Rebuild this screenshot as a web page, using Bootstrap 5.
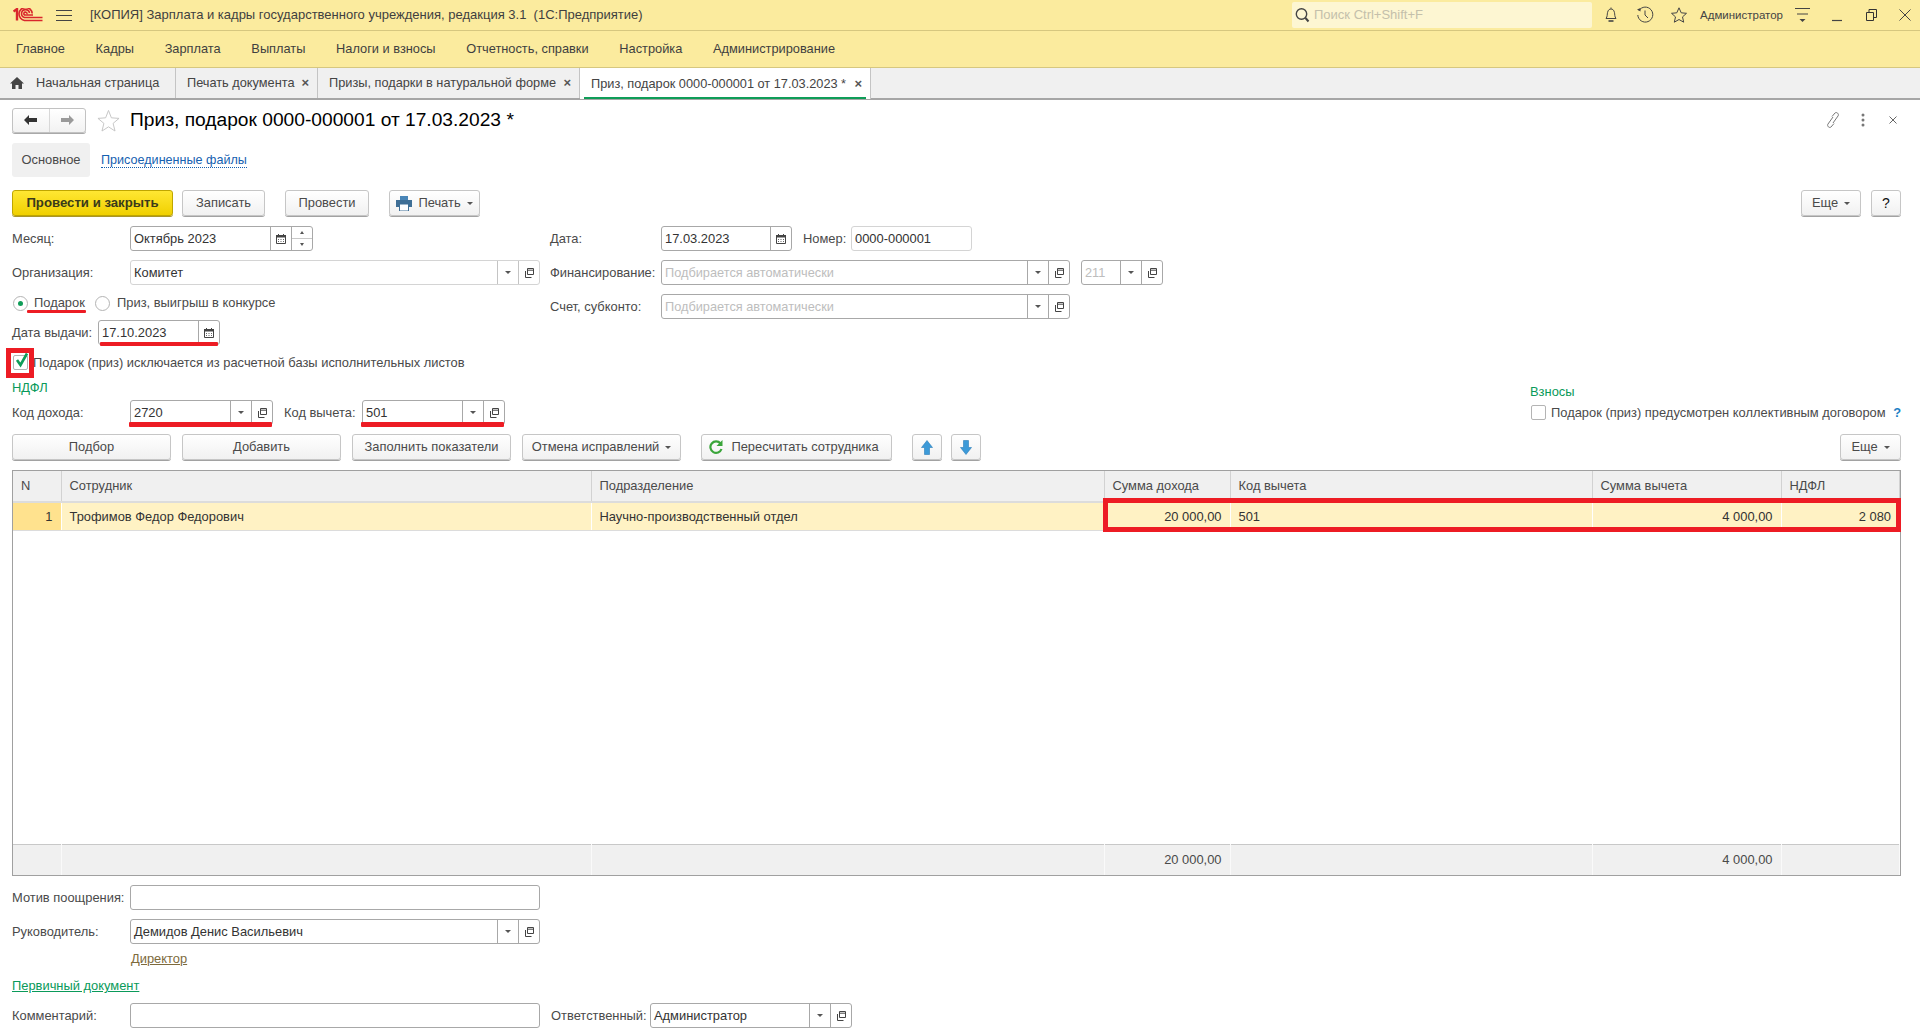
<!DOCTYPE html>
<html lang="ru">
<head>
  <meta charset="UTF-8" />
  <title>Приз, подарок 0000-000001 от 17.03.2023</title>
  <link href="https://cdn.jsdelivr.net/npm/bootstrap@5.3.0/dist/css/bootstrap.min.css" rel="stylesheet">
  <style>
    html, body { height: 100%; margin: 0; }
    body {
      width: 1920px; height: 1035px; overflow: hidden; background: #fff;
      font-family: "Liberation Sans", Arial, sans-serif; font-size: 12.9px; color: #4a4a4a; line-height: 16px;
    }
    /* top bars */
    .title-bar { height: 31px; background: #fbeb9e; border-bottom: 1px solid #d6c77f; padding-left: 13px; color: #3f3f3f; font-size: 13px; }
    .burger { margin-left: 13px; }
    .title-text { margin-left: 18px; width: 1202px; white-space: nowrap; }
    .search-box { width: 300px; height: 26px; background: #fdf6d2; border-radius: 2px; padding-left: 3px; color: #c4c0ab; gap: 4px; }
    .sys-bell { margin-left: 11px; }
    .sys-hist { margin-left: 17px; }
    .sys-star { margin-left: 16px; }
    .sys-user { font-size: 11.5px; width: 95px; margin-left: 12px; color: #444; white-space: nowrap; }
    .sys-min { margin-left: 20px; }
    .sys-rest { margin-left: 23px; }
    .sys-close { margin-left: 22px; }
    .menu-bar { height: 37px; background: #fbeb9e; border-bottom: 1px solid #d6c77f; padding-left: 16px; gap: 30.7px; color: #3f3f3f; font-size: 12.8px; }
    .tab-bar { height: 32px; background: #f0f0f0; border-bottom: 2px solid #a6a6a6; color: #444; font-size: 12.75px; }
    .tab-item { height: 30px; border-right: 1px solid #c4c4c4; padding-left: 11px; white-space: nowrap; position: relative; }
    .tab-home { width: 176px; padding-left: 10px; gap: 12px; }
    .tab-print { width: 142px; }
    .tab-prizes { width: 262px; }
    .tab-current { width: 291px; background: #fff; height: 31px; padding-left: 11px; }
    .tab-current::after { content: ""; position: absolute; left: 4px; right: 4px; bottom: 0; height: 2px; background: #0f9d58; }
    .tab-x { margin-left: auto; margin-right: 8px; font-weight: 700; color: #555; font-size: 13px; }
    /* form */
    .doc-body { padding: 8px 19px 0 12px; }
    .head-row { height: 24px; }
    .nav-pair { width: 74px; height: 25px; border: 1px solid #c2c2c2; border-radius: 3px; box-shadow: 0 1px 0 #a9a9a9; background: linear-gradient(#fff, #f2f2f2); }
    .nav-pair span { flex: 1; display: flex; align-items: center; justify-content: center; height: 100%; }
    .nav-pair span + span { border-left: 1px solid #d8d8d8; }
    .star-fav { margin-left: 11px; }
    .doc-title { font-size: 19.2px; color: #000; margin-left: 10px; white-space: nowrap; }
    .doc-tools { margin-left: auto; }
    .tool-dots { margin-left: 20px; }
    .tool-x { margin-left: 24px; margin-right: 4px; }
    .page-tabs { margin-top: 11px; height: 34px; }
    .page-tab-on { width: 78px; height: 34px; background: #f0f0f0; border-radius: 3px; justify-content: center; }
    .page-tab-link { margin-left: 11px; color: #1560b0; border-bottom: 1px dotted #1560b0; line-height: 14px; font-size: 12.6px; }
    .cmd-row { margin-top: 13px; height: 26px; }
    .onec-btn {
      height: 26px; padding: 0; border: 1px solid #c6c6c6; border-radius: 3px; color: #4a4a4a; font-size: 12.9px; line-height: 16px;
      background: linear-gradient(#fff, #f1f1f1); box-shadow: 0 1px 0 #a2a2a2; display: inline-flex; align-items: center; justify-content: center; gap: 6px; flex: none;
    }
    .btn-post { width: 161px; font-weight: 700; font-size: 13.2px; color: #3a3a1a; border-color: #bfa600; background: linear-gradient(#ffe733, #f0d000); box-shadow: 0 1px 0 #a9952a; }
    .btn-save { width: 83px; margin-left: 9px; }
    .btn-run { width: 84px; margin-left: 20px; }
    .btn-print { width: 91px; margin-left: 20px; }
    .btn-more { width: 60px; }
    .btn-help { width: 30px; margin-left: 10px; color: #111; font-size: 14px; }
    .caret-dn { width: 0; height: 0; border-left: 3px solid transparent; border-right: 3px solid transparent; border-top: 3px solid #555; flex: none; }
    .fm-left { width: 538px; flex: none; }
    .fm-cols { margin-top: 10px; }
    .fm-row { height: 25px; }
    .fm-row + .fm-row { margin-top: 9px; }
    .lbl-w { width: 118px; flex: none; white-space: nowrap; }
    .lbl-r { width: 111px; flex: none; white-space: nowrap; }
    .fld {
      height: 25px; border: 1px solid #a8a8a8; border-radius: 3px; background: #fff; display: flex; align-items: stretch; flex: none; color: #333; position: relative;
    }
    .fld-soft { border-color: #d4d4d4; }
    .fld-val { flex: 1; padding-left: 3px; display: flex; align-items: center; white-space: nowrap; overflow: hidden; }
    .fld-ph { color: #bdbdbd; font-size: 12.75px; }
    .fld-seg { width: 21px; flex: none; border-left: 1px solid #a8a8a8; display: flex; align-items: center; justify-content: center; }
    .fld-soft .fld-seg { border-color: #c4c4c4; }
    .fld-spin { flex-direction: column; }
    .fld-spin i { flex: 1; width: 100%; display: flex; align-items: center; justify-content: center; }
    .fld-spin i + i { border-top: 1px solid #c8c8c8; }
    .caret-up { width: 0; height: 0; border-left: 2px solid transparent; border-right: 2px solid transparent; border-bottom: 3px solid #555; }
    .caret-sm { width: 0; height: 0; border-left: 2px solid transparent; border-right: 2px solid transparent; border-top: 3px solid #555; }
    .w-month { width: 183px; }
    .w-org { width: 410px; }
    .w-date { width: 122px; }
    .w-docdate { width: 131px; }
    .w-num { width: 121px; }
    .w-fin { width: 409px; }
    .w-kbk { width: 82px; margin-left: 11px; }
    .w-code { width: 143px; }
    .lbl-num { width: 48px; margin-left: 11px; flex: none; }
    .radio-row { height: 20px; margin-top: 8px; padding-left: 1px; }
    .rb { width: 15px; height: 15px; border: 1px solid #b4b4b4; border-radius: 50%; background: #fff; display: flex; align-items: center; justify-content: center; flex: none; }
    .rb-dot { width: 5px; height: 5px; border-radius: 50%; background: #0f9d58; }
    .radio-t1 { width: 52px; margin: 0 9px 0 6px; position: relative; white-space: nowrap; }
    .radio-t2 { margin-left: 7px; }
    .date-row { margin-top: 7px; height: 25px; }
    .lbl-date { width: 86px; flex: none; white-space: nowrap; }
    .ul-red { position: absolute; background: #ed1c24; border-radius: 1px; }
    .ul-gift { left: -7px; right: 0; bottom: -2px; height: 3px; }
    .ul-date { left: 1px; right: 1px; bottom: -2px; height: 4px; }
    .ul-code { left: -2px; right: 0; bottom: -3px; height: 5px; }
    .chk-row { margin-top: 10px; height: 15px; padding-left: 1px; position: relative; }
    .chk-box { width: 15px; height: 15px; border: 1px solid #b4b4b4; border-radius: 2px; background: #fff; flex: none; position: relative; }
    .chk-mark { position: absolute; left: 0; top: -4px; }
    .chk-red { position: absolute; left: -8px; top: -8px; width: 28px; height: 30px; border: 5px solid #ed1c24; }
    .chk-text { margin-left: 5px; white-space: nowrap; }
    .sec-row { margin-top: 10px; height: 15px; }
    .sec-title { color: #0a9a5a; }
    .code-row { height: 25px; margin-top: 5px; }
    .vz-block { width: 371px; flex: none; margin-left: auto; }
    .vz-title { margin-top: 14px; height: 16px; }
    .vz-line { margin-top: 5px; height: 15px; padding-left: 1px; }
    .vz-help { margin-left: auto; color: #1b7fc4; font-weight: 700; }
    .lbl-code2 { width: 72px; margin: 0 6px 0 11px; flex: none; white-space: nowrap; }
    .grid-cmd { margin-top: 9px; height: 26px; gap: 11px; }
    .grid-cmd .onec-btn { width: 159px; }
    .grid-cmd .btn-fix { margin-right: 9px; }
    .grid-cmd .btn-calc { width: 191px; margin-right: 9px; gap: 8px; padding-right: 5px; }
    .grid-cmd .btn-arrow { width: 30px; margin-right: -2px; }
    .grid-cmd .btn-tail { width: 61px; margin-left: auto; }
    /* tabular part */
    .grid-wrap { margin-top: 10px; height: 406px; border: 1px solid #a0a0a0; position: relative; }
    .doc-grid { table-layout: fixed; width: 100%; height: 100%; --bs-table-color: #4a4a4a; --bs-table-bg: transparent; --bs-table-border-color: #dcdcdc; }
    .doc-grid td, .doc-grid th { padding: 0 8px; border-width: 0 1px 0 0; border-style: solid; vertical-align: middle; font-weight: 400; white-space: nowrap; box-shadow: none; }
    .doc-grid th { background: #f0f0f0; height: 31px; border-bottom: 2px solid #dcdcdc; border-right-color: #d2d2d2; }
    .doc-grid .row-on td { background: #fff2c4; height: 28px; padding-top: 1px; color: #333; border-bottom: 1px solid #dcdcdc; border-right-color: #fff; }
    .doc-grid .row-on .cell-no { background: #ffe28e; text-align: right; }
    .doc-grid .row-gap td { border: 0; }
    .doc-grid .row-foot td { background: #f0f0f0; height: 31px; border-top: 1px solid #c8c8c8; border-right-color: #fafafa; }
    .col-no { width: 48px; } .col-emp { width: 530px; } .col-dep { width: 513px; }
    .col-sum { width: 126px; } .col-code { width: 362px; } .col-ded { width: 189px; }
    .num-r { text-align: right; }
    .row-mark { position: absolute; left: 1090px; right: -1px; top: 27px; height: 34px; border: 5px solid #ed1c24; pointer-events: none; }
    /* footer fields */
    .foot-block { margin-top: 9px; }
    .foot-row { height: 25px; }
    .foot-row + .foot-row { margin-top: 9px; }
    .link-boss { margin: 7px 0 0 119px; height: 16px; color: #7d6a3c; text-decoration: underline; width: 60px; }
    .link-doc { margin: 11px 0 0 0; height: 16px; color: #0a9a5a; text-decoration: underline; }
    .foot-last { margin-top: 9px; height: 25px; }
    .w-foot { width: 410px; }
    .w-resp { width: 202px; }
    .lbl-resp { width: 93px; margin: 0 6px 0 11px; flex: none; white-space: nowrap; }
  </style>
</head>
<body>

  <svg width="0" height="0" class="position-absolute">
    <symbol id="i-open" viewBox="0 0 12 12"><path d="M4.5 1.5h6v6h-6z M4.5 3.2h6 M2.5 4v6.5h6" fill="none" stroke="#444" stroke-width="1"/></symbol>
    <symbol id="i-cal" viewBox="0 0 12 12"><path d="M1.5 2.5h9v8h-9z" fill="none" stroke="#444"/><path d="M1 2h10v2.5H1z M3 1h1v2H3z M8 1h1v2H8z" fill="#444"/><path d="M3 6h1v1H3z M5.5 6h1v1h-1z M8 6h1v1H8z M3 8h1v1H3z M5.5 8h1v1h-1z M8 8h1v1H8z" fill="#666"/></symbol>
  </svg>

  <div class="title-bar d-flex align-items-center">
    <svg width="30" height="14" viewBox="0 0 30 14" fill="none" stroke="#d9262c" stroke-width="1.6">
      <path d="M0.5 3.5 L4 1 V12.5" stroke-width="2.4"/>
      <path d="M16.5 5 A4 4 0 1 0 11.5 9.5 H29.5"/>
      <path d="M19.2 5.5 A6.6 6.6 0 1 0 11.5 12.5 H29.5"/>
      <path d="M14 6 A1.6 1.6 0 1 0 11.5 7 H20"/>
    </svg>
    <svg width="16" height="13" viewBox="0 0 16 13" class="burger" stroke="#444" stroke-width="1.2"><path d="M0 1.5h16M0 6.5h16M0 11.5h16"/></svg>
    <span class="title-text">[КОПИЯ] Зарплата и кадры государственного учреждения, редакция 3.1&nbsp; (1С:Предприятие)</span>
    <div class="search-box d-flex align-items-center">
      <svg width="15" height="16" viewBox="0 0 15 16" fill="none" stroke="#444" stroke-width="1.4"><circle cx="6.5" cy="7" r="5.2"/><path d="M10.5 11l3 3.5" stroke-width="2"/></svg>
      <span>Поиск Ctrl+Shift+F</span>
    </div>
    <svg width="16" height="18" viewBox="0 0 16 18" class="sys-bell" fill="none" stroke="#444"><path d="M8 1.5v1.200M3 12.500c1.600-2 1-4 1.600-6.200C5.100 4 6.400 3 8 3s2.900 1 3.400 3.300c.6 2.200 0 4.200 1.600 6.200z"/><path d="M5.500 15h5" stroke-width="1.6"/></svg>
    <svg width="18" height="18" viewBox="0 0 18 18" class="sys-hist" fill="none" stroke="#444"><path d="M3 4.500A7.500 7.500 0 1 1 1.800 9"/><path d="M9 4.500V9l3 3"/><path d="M1 3.500l3.500-1.500v3.500z" fill="#444" stroke="none"/></svg>
    <svg width="18" height="18" viewBox="0 0 18 18" class="sys-star" fill="none" stroke="#444"><path d="M9 1.800l2.200 5 5.300.5-4 3.600 1.200 5.300L9 13.500l-4.700 2.700 1.200-5.300-4-3.600 5.300-.5z"/></svg>
    <span class="sys-user">Администратор</span>
    <svg width="16" height="18" viewBox="0 0 16 18" fill="none" stroke="#444"><path d="M0 2.500h15M2 8h11"/><path d="M4.500 13h6L7.500 16z" fill="#444" stroke="none"/></svg>
    <svg width="12" height="14" viewBox="0 0 12 14" class="sys-min" stroke="#444" stroke-width="1.2"><path d="M1 12.500h10"/></svg>
    <svg width="11" height="12" viewBox="0 0 11 12" class="sys-rest" fill="none" stroke="#333"><path d="M0.500 3.500h7v8h-7z M3 3.500V.5h7.500v8H7.500"/></svg>
    <svg width="12" height="12" viewBox="0 0 12 12" class="sys-close" stroke="#444"><path d="M.5.500l11 11M11.500.5l-11 11"/></svg>
  </div>

  <div class="menu-bar d-flex align-items-center">
    <span>Главное</span><span>Кадры</span><span>Зарплата</span><span>Выплаты</span><span>Налоги и взносы</span><span>Отчетность, справки</span><span>Настройка</span><span>Администрирование</span>
  </div>

  <div class="tab-bar d-flex">
    <div class="tab-item tab-home d-flex align-items-center">
      <svg width="14" height="12" viewBox="0 0 14 12" fill="#444"><path d="M7 0L0 6.500h2V12h3.500V8h3v4H12V6.500h2z"/></svg>
      <span>Начальная страница</span>
    </div>
    <div class="tab-item tab-print d-flex align-items-center"><span>Печать документа</span><span class="tab-x">×</span></div>
    <div class="tab-item tab-prizes d-flex align-items-center"><span>Призы, подарки в натуральной форме</span><span class="tab-x">×</span></div>
    <div class="tab-item tab-current d-flex align-items-center"><span>Приз, подарок 0000-000001 от 17.03.2023 *</span><span class="tab-x">×</span></div>
  </div>

  <div class="doc-body">
    <div class="head-row d-flex align-items-center">
      <div class="nav-pair d-flex">
        <span><svg width="14" height="10" viewBox="0 0 14 10" fill="#333"><path d="M5 0v3h8v4H5v3L0 5z"/></svg></span>
        <span><svg width="14" height="10" viewBox="0 0 14 10" fill="#9a9a9a"><path d="M9 0v3H1v4h8v3l5-5z"/></svg></span>
      </div>
      <svg width="23" height="23" viewBox="0 0 24 24" fill="#fff" stroke="#c4c4c4" class="star-fav"><path d="M12 1.500l3 7.700 8 .6-6.200 5.200 2 8L12 18.600 5.200 23l2-8L1 9.800l8-.6z"/></svg>
      <span class="doc-title">Приз, подарок 0000-000001 от 17.03.2023 *</span>
      <div class="doc-tools d-flex align-items-center">
        <svg width="16" height="18" viewBox="0 0 16 18" fill="none" stroke="#777"><path d="M7 5.500l3-3.500c1.500-1.500 4.500 1 3 3l-5 7"/><path d="M9 12.500l-3 3.500c-1.500 1.500-4.500-1-3-3l5-7"/></svg>
        <svg width="4" height="14" viewBox="0 0 4 14" class="tool-dots" fill="#777"><circle cx="2" cy="2" r="1.5"/><circle cx="2" cy="7" r="1.5"/><circle cx="2" cy="12" r="1.5"/></svg>
        <svg width="8" height="8" viewBox="0 0 8 8" class="tool-x" stroke="#666"><path d="M.5.500l7 7M7.500.5l-7 7"/></svg>
      </div>
    </div>

    <div class="page-tabs d-flex align-items-center">
      <div class="page-tab-on d-flex align-items-center">Основное</div>
      <span class="page-tab-link">Присоединенные файлы</span>
    </div>

    <div class="cmd-row d-flex">
      <button class="btn onec-btn btn-post">Провести и закрыть</button>
      <button class="btn onec-btn btn-save">Записать</button>
      <button class="btn onec-btn btn-run">Провести</button>
      <button class="btn onec-btn btn-print">
        <svg width="16" height="15" viewBox="0 0 16 15"><path d="M4 0h8v4H4z" fill="#4a86b8"/><path d="M0 4h16v7H0z" fill="#3f6f96"/><path d="M3.500 8h9v7h-9z" fill="#fff" stroke="#3f6f96"/></svg>
        <span>Печать</span><span class="caret-dn"></span>
      </button>
      <button class="btn onec-btn btn-more ms-auto">Еще <span class="caret-dn"></span></button>
      <button class="btn onec-btn btn-help">?</button>
    </div>

    <div class="fm-cols d-flex">
      <div class="fm-left">
        <div class="fm-row d-flex align-items-center">
          <span class="lbl-w">Месяц:</span>
          <div class="fld w-month">
            <div class="fld-val">Октябрь 2023</div>
            <div class="fld-seg"><svg width="12" height="12"><use href="#i-cal"/></svg></div>
            <div class="fld-seg fld-spin"><i><span class="caret-up"></span></i><i><span class="caret-sm"></span></i></div>
          </div>
        </div>
        <div class="fm-row d-flex align-items-center">
          <span class="lbl-w">Организация:</span>
          <div class="fld fld-soft w-org">
            <div class="fld-val">Комитет</div>
            <div class="fld-seg"><span class="caret-dn"></span></div>
            <div class="fld-seg"><svg width="12" height="12"><use href="#i-open"/></svg></div>
          </div>
        </div>
        <div class="radio-row d-flex align-items-center">
          <span class="rb"><span class="rb-dot"></span></span>
          <span class="radio-t1">Подарок<span class="ul-red ul-gift"></span></span>
          <span class="rb"></span>
          <span class="radio-t2">Приз, выигрыш в конкурсе</span>
        </div>
        <div class="date-row d-flex align-items-center">
          <span class="lbl-date">Дата выдачи:</span>
          <div class="fld w-date">
            <div class="fld-val">17.10.2023</div>
            <div class="fld-seg"><svg width="12" height="12"><use href="#i-cal"/></svg></div>
            <span class="ul-red ul-date"></span>
          </div>
        </div>
        <div class="chk-row d-flex align-items-center">
          <span class="chk-box">
            <svg class="chk-mark" width="16" height="16" viewBox="0 0 16 16" fill="none" stroke="#0f9d58" stroke-width="2.6"><path d="M3 8l3.500 5L13 1.500"/></svg>
            <span class="chk-red"></span>
          </span>
          <span class="chk-text">Подарок (приз) исключается из расчетной базы исполнительных листов</span>
        </div>
      </div>
      <div class="flex-grow-1">
        <div class="fm-row d-flex align-items-center">
          <span class="lbl-r">Дата:</span>
          <div class="fld w-docdate">
            <div class="fld-val">17.03.2023</div>
            <div class="fld-seg"><svg width="12" height="12"><use href="#i-cal"/></svg></div>
          </div>
          <span class="lbl-num">Номер:</span>
          <div class="fld fld-soft w-num"><div class="fld-val">0000-000001</div></div>
        </div>
        <div class="fm-row d-flex align-items-center">
          <span class="lbl-r">Финансирование:</span>
          <div class="fld w-fin">
            <div class="fld-val fld-ph">Подбирается автоматически</div>
            <div class="fld-seg"><span class="caret-dn"></span></div>
            <div class="fld-seg"><svg width="12" height="12"><use href="#i-open"/></svg></div>
          </div>
          <div class="fld w-kbk">
            <div class="fld-val fld-ph">211</div>
            <div class="fld-seg"><span class="caret-dn"></span></div>
            <div class="fld-seg"><svg width="12" height="12"><use href="#i-open"/></svg></div>
          </div>
        </div>
        <div class="fm-row d-flex align-items-center">
          <span class="lbl-r">Счет, субконто:</span>
          <div class="fld w-fin">
            <div class="fld-val fld-ph">Подбирается автоматически</div>
            <div class="fld-seg"><span class="caret-dn"></span></div>
            <div class="fld-seg"><svg width="12" height="12"><use href="#i-open"/></svg></div>
          </div>
        </div>
      </div>
    </div>

    <div class="d-flex">
      <div class="flex-grow-1">
        <div class="sec-row sec-title">НДФЛ</div>
        <div class="code-row d-flex align-items-center">
          <span class="lbl-w">Код дохода:</span>
          <div class="fld w-code">
            <div class="fld-val">2720</div>
            <div class="fld-seg"><span class="caret-dn"></span></div>
            <div class="fld-seg"><svg width="12" height="12"><use href="#i-open"/></svg></div>
            <span class="ul-red ul-code"></span>
          </div>
          <span class="lbl-code2">Код вычета:</span>
          <div class="fld w-code">
            <div class="fld-val">501</div>
            <div class="fld-seg"><span class="caret-dn"></span></div>
            <div class="fld-seg"><svg width="12" height="12"><use href="#i-open"/></svg></div>
            <span class="ul-red ul-code"></span>
          </div>
        </div>
      </div>
      <div class="vz-block">
        <div class="sec-title vz-title">Взносы</div>
        <div class="vz-line d-flex align-items-center">
          <span class="chk-box"></span>
          <span class="chk-text">Подарок (приз) предусмотрен коллективным договором</span>
          <span class="vz-help">?</span>
        </div>
      </div>
    </div>

    <div class="grid-cmd d-flex">
      <button class="btn onec-btn">Подбор</button>
      <button class="btn onec-btn">Добавить</button>
      <button class="btn onec-btn">Заполнить показатели</button>
      <button class="btn onec-btn btn-fix">Отмена исправлений <span class="caret-dn"></span></button>
      <button class="btn onec-btn btn-calc">
        <svg width="14" height="14" viewBox="0 0 14 14" fill="none" stroke="#3aa53a" stroke-width="2.2"><path d="M11.500 3.500A5.700 5.700 0 1 0 12.500 9"/><path d="M13.500 0v6h-6z" fill="#3aa53a" stroke="none"/></svg>
        <span>Пересчитать сотрудника</span>
      </button>
      <button class="btn onec-btn btn-arrow"><svg width="12" height="15" viewBox="0 0 12 15"><path d="M6 .5l5.500 7H8.500v7h-5v-7H.5z" fill="#3c9ad8" stroke="#2a7cb8" stroke-width=".6"/></svg></button>
      <button class="btn onec-btn btn-arrow"><svg width="12" height="15" viewBox="0 0 12 15"><path d="M6 14.500l5.500-7H8.500v-7h-5v7H.5z" fill="#3c9ad8" stroke="#2a7cb8" stroke-width=".6"/></svg></button>
      <button class="btn onec-btn btn-tail">Еще <span class="caret-dn"></span></button>
    </div>

    <div class="grid-wrap">
      <table class="table mb-0 doc-grid">
        <colgroup>
          <col class="col-no"><col class="col-emp"><col class="col-dep"><col class="col-sum"><col class="col-code"><col class="col-ded"><col>
        </colgroup>
        <thead>
          <tr><th>N</th><th>Сотрудник</th><th>Подразделение</th><th>Сумма дохода</th><th>Код вычета</th><th>Сумма вычета</th><th>НДФЛ</th></tr>
        </thead>
        <tbody>
          <tr class="row-on">
            <td class="cell-no">1</td><td>Трофимов Федор Федорович</td><td>Научно-производственный отдел</td>
            <td class="num-r">20 000,00</td><td>501</td><td class="num-r">4 000,00</td><td class="num-r">2 080</td>
          </tr>
          <tr class="row-gap"><td colspan="7"></td></tr>
          <tr class="row-foot">
            <td></td><td></td><td></td><td class="num-r">20 000,00</td><td></td><td class="num-r">4 000,00</td><td></td>
          </tr>
        </tbody>
      </table>
      <div class="row-mark"></div>
    </div>

    <div class="foot-block">
      <div class="foot-row d-flex align-items-center">
        <span class="lbl-w">Мотив поощрения:</span>
        <div class="fld w-foot"><div class="fld-val"></div></div>
      </div>
      <div class="foot-row d-flex align-items-center">
        <span class="lbl-w">Руководитель:</span>
        <div class="fld w-foot">
          <div class="fld-val">Демидов Денис Васильевич</div>
          <div class="fld-seg"><span class="caret-dn"></span></div>
          <div class="fld-seg"><svg width="12" height="12"><use href="#i-open"/></svg></div>
        </div>
      </div>
      <div class="link-boss">Директор</div>
      <div class="link-doc">Первичный документ</div>
      <div class="foot-last d-flex align-items-center">
        <span class="lbl-w">Комментарий:</span>
        <div class="fld w-foot"><div class="fld-val"></div></div>
        <span class="lbl-resp">Ответственный:</span>
        <div class="fld w-resp">
          <div class="fld-val">Администратор</div>
          <div class="fld-seg"><span class="caret-dn"></span></div>
          <div class="fld-seg"><svg width="12" height="12"><use href="#i-open"/></svg></div>
        </div>
      </div>
    </div>
  </div>

  <script src="https://cdn.jsdelivr.net/npm/bootstrap@5.3.0/dist/js/bootstrap.bundle.min.js"></script>
</body>
</html>
